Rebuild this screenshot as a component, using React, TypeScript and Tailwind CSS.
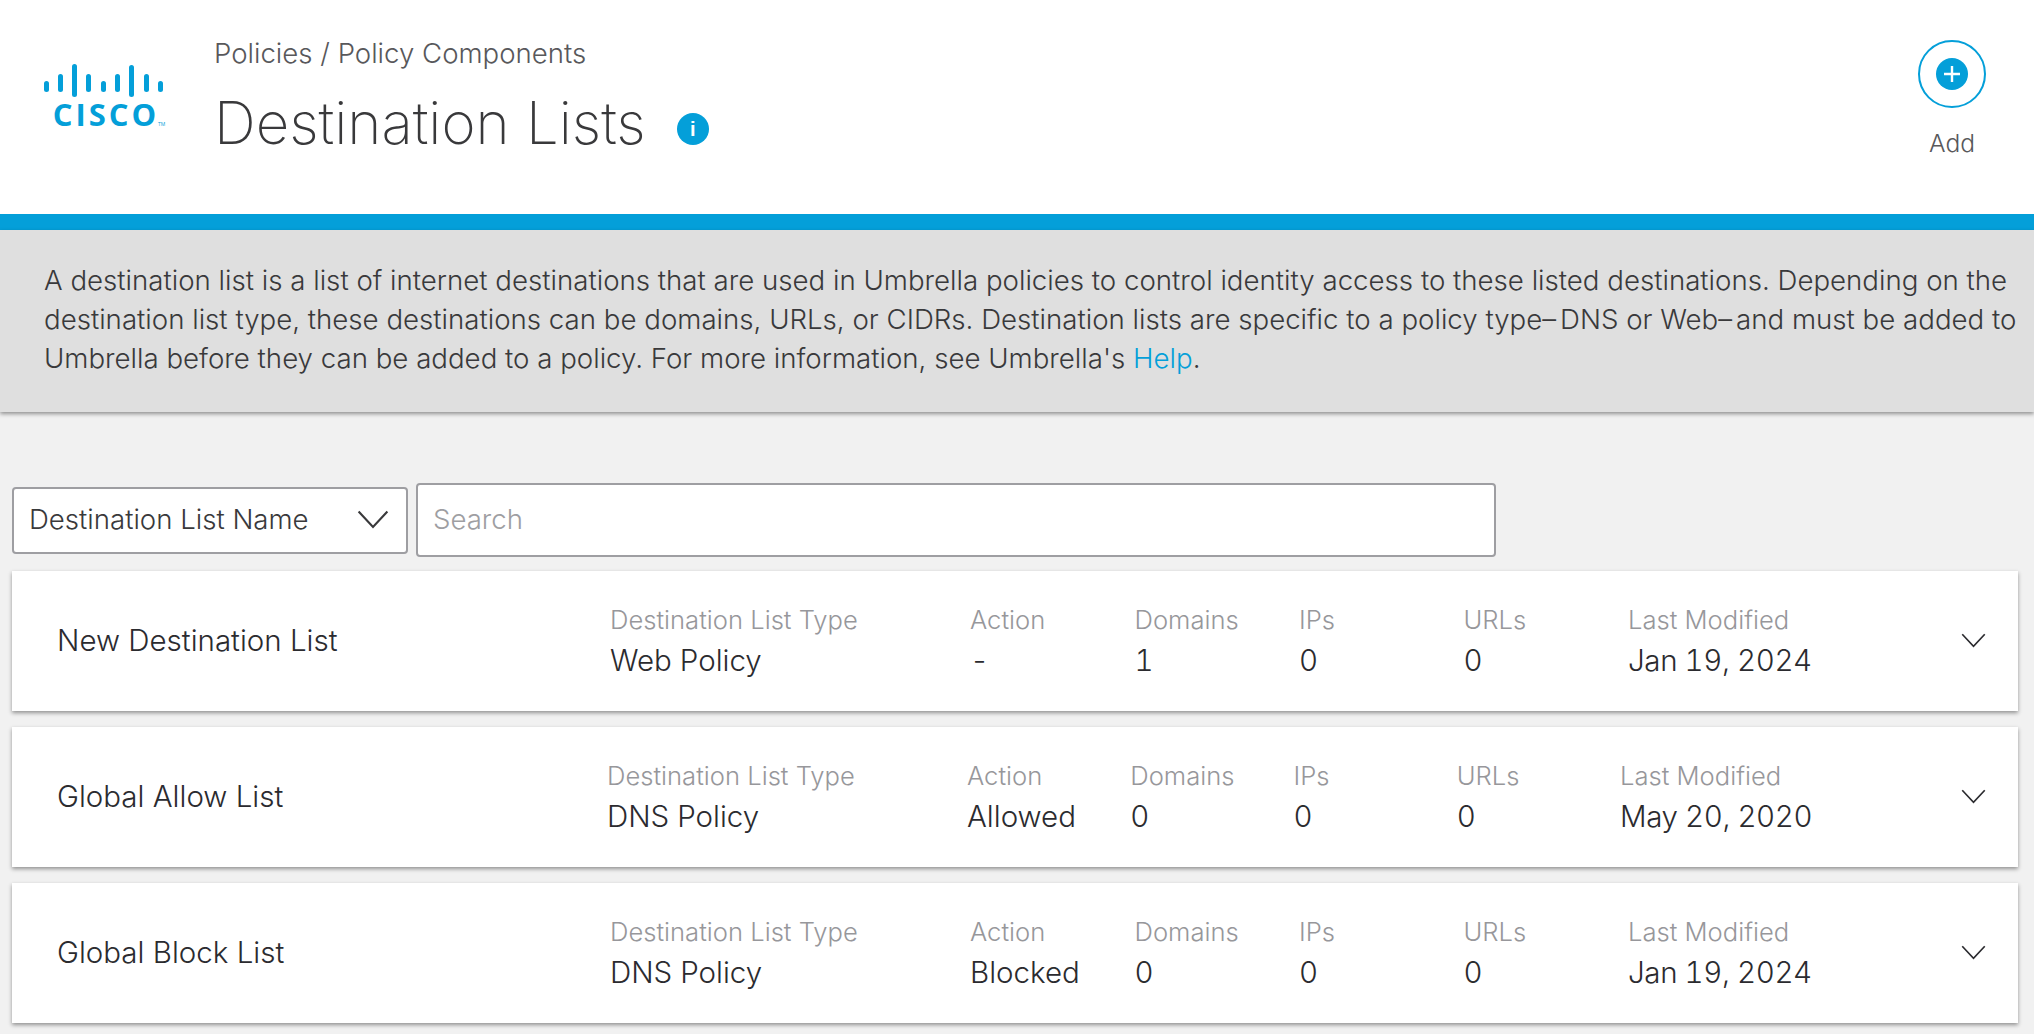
const rows = [
  {
    name: "New Destination List",
    type: "Web Policy",
    action: "-",
    domains: "1",
    ips: "0",
    urls: "0",
    modified: "Jan 19, 2024",
    typeClass: "w-[360px]",
    colClass: "w-[164.5px]",
    nameClass: "w-[553px]",
  },
  {
    name: "Global Allow List",
    type: "DNS Policy",
    action: "Allowed",
    domains: "0",
    ips: "0",
    urls: "0",
    modified: "May 20, 2020",
    typeClass: "w-[360px]",
    colClass: "w-[163.25px]",
    nameClass: "w-[550px]",
  },
  {
    name: "Global Block List",
    type: "DNS Policy",
    action: "Blocked",
    domains: "0",
    ips: "0",
    urls: "0",
    modified: "Jan 19, 2024",
    typeClass: "w-[360px]",
    colClass: "w-[164.5px]",
    nameClass: "w-[553px]",
  },
];

function CiscoLogo() {
  const bars = [
    [3, 81, 11],
    [17, 74, 18],
    [31, 64, 33],
    [45, 74, 18],
    [60, 81, 11],
    [74, 74, 18],
    [88, 65, 32],
    [103, 74, 18],
    [117, 81, 11],
  ];
  return (
    <div className="flex w-[126px] flex-col items-center">
      <svg width="126" height="40" viewBox="0 60 126 40" className="block fill-[#049fd9]">
        {bars.map(([x, y, h]) => (
          <rect key={x} x={x} y={y} width="5" height={h} rx="2.5" />
        ))}
      </svg>
      <div className="relative mt-[-3px] pl-[4px] font-['Open_Sans',sans-serif] text-[31px] leading-[34px] font-bold tracking-[3px] text-[#049fd9]">
        CISCO
        <span className="absolute right-[-6px] bottom-[4px] text-[5px] leading-none font-normal tracking-normal">TM</span>
      </div>
    </div>
  );
}

function Field({ label, value, className, valueClass }: { label: string; value: string; className: string; valueClass?: string }) {
  return (
    <div className={className}>
      <div className="text-[25.6px] leading-[40px] font-light text-[#97979b]">{label}</div>
      <div className={`text-[29.5px] leading-[40px] font-light text-[#2b2b2f] tabular-nums ${valueClass ?? ""}`}>{value}</div>
    </div>
  );
}

function Chevron({ size, className }: { size: number; className?: string }) {
  return (
    <svg width={size} height={size * 0.6} viewBox="0 0 30 18" fill="none" className={className}>
      <path d="M1.5 1.5 15 16 28.5 1.5" stroke="currentColor" strokeWidth="2" />
    </svg>
  );
}

export default function App() {
  return (
    <div className="h-[1034px] overflow-hidden bg-[#f1f1f1] font-['Inter',sans-serif] text-[#39393b]">
      <header className="flex h-[214px] bg-white">
        <div className="w-[214px] pl-[41px]">
          <div className="mt-[60px]">
            <CiscoLogo />
          </div>
        </div>
        <div className="flex-1 pt-[32px]">
          <div className="text-[27.6px] leading-[42px] font-light text-[#58585b]">Policies / Policy Components</div>
          <div className="mt-[14px] flex items-center">
            <h1 className="text-[58.2px] leading-[70px] font-extralight text-[#39393b]">Destination Lists</h1>
            <span className="mt-[12px] ml-[31px] flex h-[32px] w-[32px] items-center justify-center rounded-full bg-[#049fd9] font-['Liberation_Sans',sans-serif] text-[20px] leading-none font-bold text-white">
              i
            </span>
          </div>
        </div>
        <div className="flex w-[132px] flex-col items-center pt-[40px] pr-[32px]">
          <button className="flex h-[68px] w-[68px] items-center justify-center rounded-full border-2 border-[#049fd9]">
            <span className="flex h-[32px] w-[32px] items-center justify-center rounded-full bg-[#049fd9]">
              <svg width="18" height="18" viewBox="0 0 18 18" fill="none">
                <path d="M9 1v16M1 9h16" stroke="white" strokeWidth="2.4" />
              </svg>
            </span>
          </button>
          <span className="mt-[19px] text-[24.6px] leading-[32px] font-light text-[#58585b]">Add</span>
        </div>
      </header>
      <div className="h-[16px] bg-[#049fd9]" />
      <div className="h-[182px] bg-[#dfdfdf] pt-[31px] pl-[44px] text-[27.65px] leading-[39px] font-light whitespace-nowrap text-[#39393b] shadow-[0_2px_4px_rgba(0,0,0,0.4)]">
        <div>A destination list is a list of internet destinations that are used in Umbrella policies to control identity access to these listed destinations. Depending on the</div>
        <div>
          destination list type, these destinations can be domains, URLs, or CIDRs. Destination lists are specific to a policy type
          <span className="tracking-[4px]">–</span>DNS or Web<span className="tracking-[4px]">–</span>and must be added to
        </div>
        <div>
          Umbrella before they can be added to a policy. For more information, see Umbrella's{" "}
          <span className="text-[#049fd9]">Help</span>.
        </div>
      </div>
      <main className="flex flex-col pt-[71px] pr-[16px] pl-[12px]">
        <div className="flex items-center gap-[8px]">
          <div className="flex h-[67px] w-[396px] items-center justify-between rounded-[4px] border-2 border-[#9e9ea2] bg-white pr-[17px] pl-[15px] text-[27.6px] font-light text-[#39393b]">
            <span>Destination List Name</span>
            <Chevron size={32} />
          </div>
          <input
            placeholder="Search"
            className="h-[74px] w-[1080px] rounded-[4px] border-2 border-[#9e9ea2] bg-white px-[15px] pb-[2px] text-[27.6px] font-light placeholder:text-[#9e9ea2]"
          />
        </div>
        <div className="mt-[14px] flex flex-col gap-[16px]">
          {rows.map((row) => (
            <section
              key={row.name}
              className="flex h-[140px] items-center bg-white pb-[2px] pl-[45px] shadow-[0_2px_4px_rgba(0,0,0,0.4)]"
            >
              <div className={`${row.nameClass} text-[29.5px] font-light text-[#2b2b2f]`}>{row.name}</div>
              <Field label="Destination List Type" value={row.type} className={row.typeClass} />
              <Field label="Action" value={row.action} className={row.colClass} />
              <Field label="Domains" value={row.domains} className={row.colClass} />
              <Field label="IPs" value={row.ips} className={row.colClass} />
              <Field label="URLs" value={row.urls} className={row.colClass} />
              <Field label="Last Modified" value={row.modified} className="flex-1" valueClass="tracking-[-0.4px]" />
              <Chevron size={25} className="mr-[32px] text-[#2b2b2f]" />
            </section>
          ))}
        </div>
      </main>
    </div>
  );
}
